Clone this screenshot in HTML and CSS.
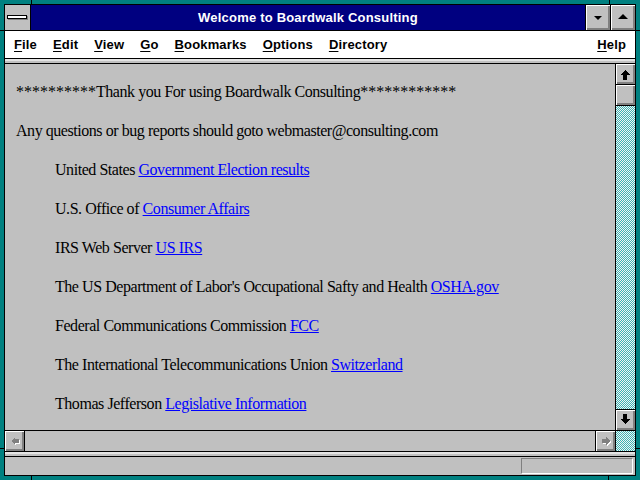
FILE: index.html
```html
<!DOCTYPE html>
<html>
<head>
<meta charset="utf-8">
<title>Welcome to Boardwalk Consulting</title>
<link rel="stylesheet" href="styles.css">
</head>
<body>
<div class="screen">
  <span class="tick v tl"></span>
  <span class="tick v tr"></span>
  <span class="tick v bl"></span>
  <span class="tick v br"></span>
  <span class="tick h lt"></span>
  <span class="tick h rt"></span>
  <span class="tick h lb"></span>
  <span class="tick h rb"></span>
  <div class="window">
    <div class="caption">
      <div class="sysmenu"><span class="sysbar"></span></div>
      <div class="title">Welcome to Boardwalk Consulting</div>
      <div class="capbtn"><span class="tri-down"></span></div>
      <div class="capbtn"><span class="tri-up"></span></div>
    </div>
    <div class="menubar">
      <span class="menu"><u>F</u>ile</span>
      <span class="menu"><u>E</u>dit</span>
      <span class="menu"><u>V</u>iew</span>
      <span class="menu"><u>G</u>o</span>
      <span class="menu"><u>B</u>ookmarks</span>
      <span class="menu"><u>O</u>ptions</span>
      <span class="menu"><u>D</u>irectory</span>
      <span class="menu help"><u>H</u>elp</span>
    </div>
    <div class="band"></div>
    <div class="main">
      <div class="content">
        <p class="line"><span class="stars">**********</span>Thank you For using Boardwalk Consulting<span class="stars">************</span></p>
        <p class="line">Any questions or bug reports should goto webmaster@consulting.com</p>
        <p class="line indent">United States <a href="#">Government Election results</a></p>
        <p class="line indent">U.S. Office of <a href="#">Consumer Affairs</a></p>
        <p class="line indent">IRS Web Server <a href="#">US IRS</a></p>
        <p class="line indent">The US Department of Labor's Occupational Safty and Health <a href="#">OSHA.gov</a></p>
        <p class="line indent">Federal Communications Commission <a href="#">FCC</a></p>
        <p class="line indent">The International Telecommunications Union <a href="#">Switzerland</a></p>
        <p class="line indent">Thomas Jefferson <a href="#">Legislative Information</a></p>
      </div>
      <div class="vscroll">
        <div class="sbtn vbtn up">
          <svg width="19" height="20" viewBox="0 0 19 20"><polygon points="4,11 9,6 14,11 11,11 11,16 7,16 7,11" fill="#000"/></svg>
        </div>
        <div class="sbtn thumb"></div>
        <div class="track"></div>
        <div class="sbtn vbtn down">
          <svg width="19" height="20" viewBox="0 0 19 20"><polygon points="7,4 11,4 11,9 14,9 9,14 4,9 7,9" fill="#000"/></svg>
        </div>
      </div>
    </div>
    <div class="hscroll">
      <div class="sbtn hbtn left">
        <svg width="19" height="20" viewBox="0 0 19 20"><polygon points="7,11 11,7 11,9 15,9 15,13 11,13 11,15" fill="#fff"/><polygon points="6,10 10,6 10,8 14,8 14,12 10,12 10,14" fill="#808080"/></svg>
      </div>
      <div class="htrack"></div>
      <div class="sbtn hbtn right">
        <svg width="19" height="20" viewBox="0 0 19 20"><polygon points="15,11 11,7 11,9 7,9 7,13 11,13 11,15" fill="#fff"/><polygon points="14,10 10,6 10,8 6,8 6,12 10,12 10,14" fill="#808080"/></svg>
      </div>
      <div class="corner"></div>
    </div>
    <div class="band"></div>
    <div class="status"><div class="statbox"></div></div>
  </div>
</div>
</body>
</html>
```
FILE: styles.css
```css
html, body {
  margin: 0;
  padding: 0;
}
body {
  width: 640px;
  height: 480px;
  overflow: hidden;
  background: #008080;
}
.screen {
  position: relative;
  width: 640px;
  height: 480px;
  box-sizing: border-box;
  padding: 4px;
  background: #008080;
}
.tick {
  position: absolute;
  background: #000;
}
.tick.v { width: 1px; height: 4px; }
.tick.h { width: 4px; height: 1px; }
.tl { left: 31px; top: 0; }
.tr { left: 609px; top: 0; }
.bl { left: 31px; top: 476px; }
.br { left: 608px; top: 476px; }
.lt { left: 0; top: 30px; }
.rt { left: 636px; top: 30px; }
.lb { left: 0; top: 448px; }
.rb { left: 636px; top: 448px; }

.window {
  height: 472px;
  box-sizing: border-box;
  border: 1px solid #000;
  display: flex;
  flex-direction: column;
  background: #c0c0c0;
}

/* caption */
.caption {
  display: flex;
  height: 25px;
  flex: none;
  border-bottom: 1px solid #000;
  background: #000080;
}
.sysmenu {
  width: 26px;
  box-sizing: border-box;
  border-right: 1px solid #000;
  background: #c0c0c0;
  display: flex;
  align-items: flex-start;
  padding: 10px 0 0 2px;
}
.sysbar {
  display: block;
  width: 18px;
  height: 2px;
  background: #fff;
  border: 1px solid #000;
  box-shadow: 1px 1px 0 #808080;
}
.title {
  flex: 1;
  color: #fff;
  font: bold 13px/25px "Liberation Sans", Arial, sans-serif;
  letter-spacing: 0.2px;
  text-align: center;
  white-space: nowrap;
}
.capbtn {
  width: 24px;
  border-left: 1px solid #000;
  background: #c0c0c0;
  box-shadow: inset 1px 1px 0 #fff, inset -2px -2px 0 #808080;
  display: flex;
  align-items: center;
  justify-content: center;
}
.tri-down {
  width: 0;
  height: 0;
  border-left: 4px solid transparent;
  border-right: 4px solid transparent;
  border-top: 4px solid #000;
  margin-top: 1px;
}
.tri-up {
  width: 0;
  height: 0;
  border-left: 5px solid transparent;
  border-right: 5px solid transparent;
  border-bottom: 5px solid #000;
  margin-top: -2px;
}

/* menu */
.menubar {
  display: flex;
  flex: none;
  height: 27px;
  background: #fff;
  border-bottom: 1px solid #000;
  padding-left: 1px;
  font: bold 13px/27px "Liberation Sans", Arial, sans-serif;
  letter-spacing: 0.15px;
  color: #000;
  white-space: nowrap;
}
.menu {
  padding: 0 8px;
}
.menu u {
  text-decoration: underline;
  text-underline-offset: 2px;
}
.help {
  margin-left: auto;
  padding-right: 9px;
}

.band {
  flex: none;
  height: 2px;
  border-top: 2px solid #e4e4e4;
  border-bottom: 1px solid #000;
  background: #c0c0c0;
}

/* main area */
.main {
  display: flex;
  flex: none;
  height: 366px;
}
.content {
  flex: 1;
  overflow: hidden;
  padding: 18px 0 0 11px;
  font: 16px "Liberation Serif", "Times New Roman", serif;
  letter-spacing: -0.45px;
  color: #000;
}
.stars {
  letter-spacing: 0;
}
.line {
  margin: 0 0 19px;
  line-height: 20px;
  white-space: nowrap;
}
.indent {
  padding-left: 39px;
}
.content a {
  color: #0000ff;
  text-decoration: underline;
}

.sbtn {
  background: #c0c0c0;
  box-shadow: inset 1px 1px 0 #fff, inset -2px -2px 0 #808080;
  display: flex;
}
.sbtn svg {
  display: block;
  shape-rendering: crispEdges;
}
.vscroll {
  width: 19px;
  flex: none;
  border-left: 1px solid #000;
  display: flex;
  flex-direction: column;
}
.vbtn, .thumb {
  height: 20px;
  flex: none;
}
.up, .thumb {
  border-bottom: 1px solid #000;
}
.down {
  border-top: 1px solid #000;
}
.track, .corner {
  background-color: #9cc8c8;
  background-image: repeating-conic-gradient(#3cb4b4 0 25%, #f4f4f4 0 50%);
  background-size: 2px 2px;
}
.track {
  flex: 1;
}

.hscroll {
  display: flex;
  flex: none;
  height: 20px;
  border-top: 1px solid #000;
  border-bottom: 1px solid #000;
}
.hbtn {
  width: 19px;
  flex: none;
}
.left {
  border-right: 1px solid #000;
}
.right {
  border-left: 1px solid #000;
  border-right: 1px solid #000;
}
.htrack {
  flex: 1;
  background: #c0c0c0;
}
.corner {
  width: 19px;
  flex: none;
}

.status {
  flex: 1;
  display: flex;
  justify-content: flex-end;
  align-items: flex-start;
  background: #c0c0c0;
}
.statbox {
  width: 110px;
  height: 14px;
  margin: 1px 2px 0 0;
  border: 1px solid;
  border-color: #808080 #fff #fff #808080;
}
```
